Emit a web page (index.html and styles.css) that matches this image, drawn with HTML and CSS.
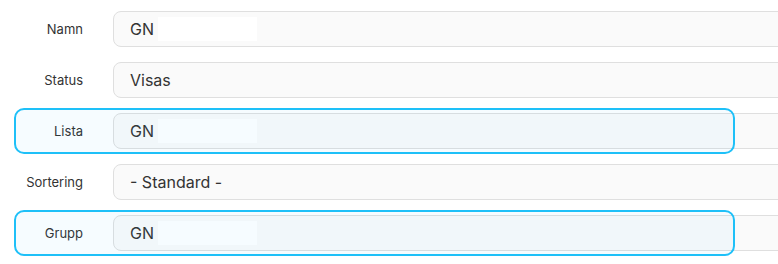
FILE: index.html
```html
<!DOCTYPE html>
<html lang="sv">
<head>
<meta charset="utf-8">
<link rel="stylesheet" href="styles.css">
</head>
<body>
<form class="form">
  <div class="row">
    <label class="label">Namn</label>
    <div class="field"><span class="value">GN</span><span class="fill"></span></div>
  </div>
  <div class="row">
    <label class="label">Status</label>
    <div class="field"><span class="value">Visas</span></div>
  </div>
  <div class="row highlighted">
    <label class="label">Lista</label>
    <div class="field"><span class="value">GN</span><span class="fill"></span></div>
  </div>
  <div class="row">
    <label class="label">Sortering</label>
    <div class="field"><span class="value">- Standard -</span></div>
  </div>
  <div class="row highlighted">
    <label class="label">Grupp</label>
    <div class="field"><span class="value">GN</span><span class="fill"></span></div>
  </div>
</form>
</body>
</html>
```
FILE: styles.css
```css
html, body {
  margin: 0;
  padding: 0;
  background: #ffffff;
}
body {
  font-family: Inter, "Noto Sans", sans-serif;
  color: #333333;
}
.form {
  display: flex;
  flex-direction: column;
  gap: 15px;
  padding: 11px 0 7px;
  width: 100%;
  overflow: hidden;
}
.row {
  position: relative;
  display: flex;
  align-items: center;
  gap: 30px;
  height: 36px;
}
.label {
  width: 83px;
  text-align: right;
  font-size: 13px;
  color: #333333;
  flex: none;
}
.field {
  box-sizing: border-box;
  flex: 1 0 auto;
  margin-right: -40px;
  height: 36px;
  border: 1px solid #dfdfdf;
  border-radius: 8px;
  background: #fafafa;
  display: flex;
  align-items: center;
  padding-left: 16px;
  font-size: 16px;
  color: #333333;
}
.fill {
  width: 99px;
  height: 24px;
  background: #ffffff;
  margin-left: 4px;
}
.highlighted::after {
  content: "";
  position: absolute;
  left: 14px;
  top: -5px;
  width: 721px;
  height: 46px;
  box-sizing: border-box;
  border: 2px solid #1ec0f8;
  border-radius: 10px;
  background: rgba(40, 185, 245, 0.045);
  pointer-events: none;
}
```
